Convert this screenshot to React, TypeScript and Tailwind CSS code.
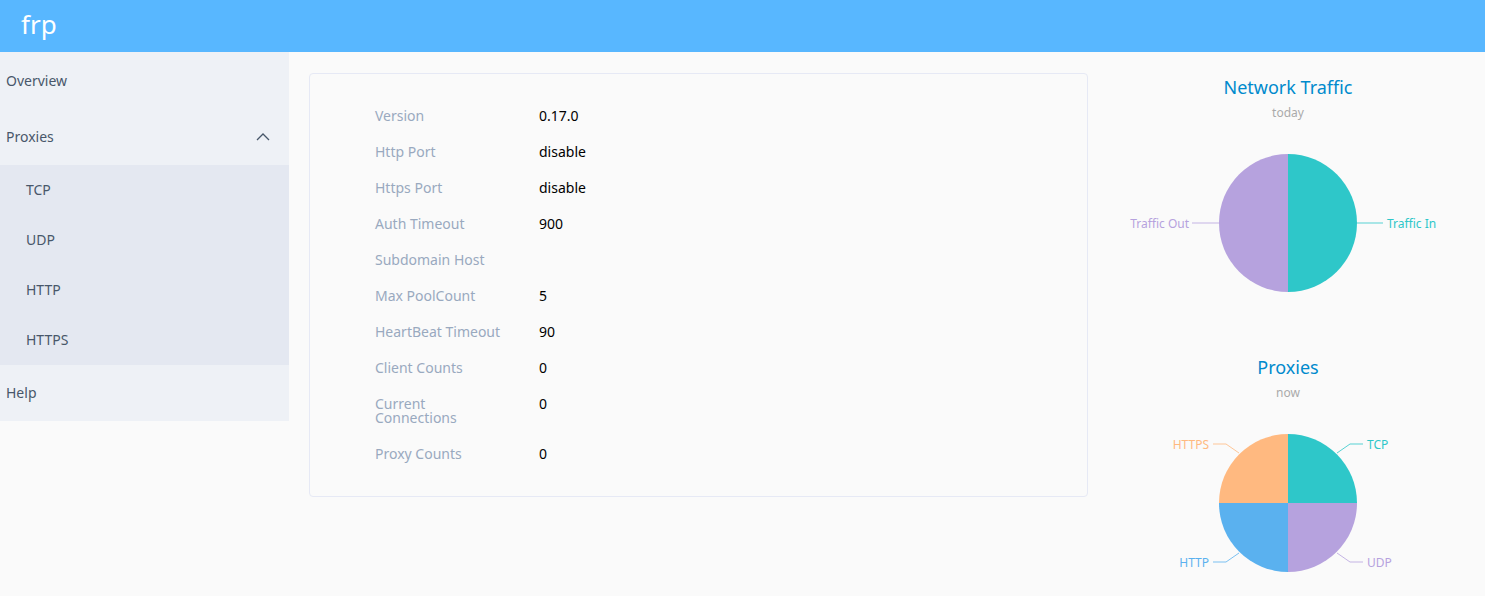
import type { ReactNode } from "react";

const font = { fontFamily: '"Noto Sans", "Liberation Sans", sans-serif' };

const serverInfo: { label: ReactNode; value: string }[] = [
  { label: "Version", value: "0.17.0" },
  { label: "Http Port", value: "disable" },
  { label: "Https Port", value: "disable" },
  { label: "Auth Timeout", value: "900" },
  { label: "Subdomain Host", value: "" },
  { label: "Max PoolCount", value: "5" },
  { label: "HeartBeat Timeout", value: "90" },
  { label: "Client Counts", value: "0" },
  {
    label: (
      <>
        Current
        <br />
        Connections
      </>
    ),
    value: "0",
  },
  { label: "Proxy Counts", value: "0" },
];

const proxyTypes = ["TCP", "UDP", "HTTP", "HTTPS"];

function Sidebar() {
  return (
    <aside className="w-[289px] shrink-0 self-start bg-[#eef1f6] text-[14px] text-[#48576a]">
      <div className="flex h-[56px] items-center pl-[6px]">Overview</div>
      <div className="flex h-[57px] items-center justify-between pl-[6px] pr-[19px]">
        <span>Proxies</span>
        <svg width="14" height="8" viewBox="0 0 14 8" fill="none">
          <polyline points="1,7 7,1 13,7" stroke="#48576a" strokeWidth="1.3" />
        </svg>
      </div>
      <div className="bg-[#e4e8f1]">
        {proxyTypes.map((t) => (
          <div key={t} className="flex h-[50px] items-center pb-[1px] pl-[26px]">
            {t}
          </div>
        ))}
      </div>
      <div className="flex h-[56px] items-center pb-[1px] pl-[6px]">Help</div>
    </aside>
  );
}

function ServerCard() {
  return (
    <div className="w-[779px] shrink-0 rounded-[4px] border border-[#e6e9f5] bg-[#fafafa] pb-[24px] pl-[65px] pt-[24px]">
      {serverInfo.map((row, i) => (
        <div key={i} className="flex py-[11px] text-[14px] leading-[14px]">
          <span className="w-[164px] shrink-0 text-[#99a9bf]">{row.label}</span>
          <span className="text-black">{row.value}</span>
        </div>
      ))}
    </div>
  );
}

type Slice = { name: string; color: string; from: number; to: number };

function arcPath(cx: number, cy: number, r: number, from: number, to: number) {
  // angles in degrees, 0 = top, clockwise
  const rad = (a: number) => ((a - 90) * Math.PI) / 180;
  const x1 = cx + r * Math.cos(rad(from));
  const y1 = cy + r * Math.sin(rad(from));
  const x2 = cx + r * Math.cos(rad(to));
  const y2 = cy + r * Math.sin(rad(to));
  const large = to - from > 180 ? 1 : 0;
  return `M${cx},${cy} L${x1},${y1} A${r},${r} 0 ${large} 1 ${x2},${y2} Z`;
}

function PieChart({
  title,
  subtitle,
  slices,
  labels,
}: {
  title: string;
  subtitle: string;
  slices: Slice[];
  labels: ReactNode;
}) {
  const cx = 197;
  const cy = 102;
  const r = 69;
  return (
    <div className="flex h-[280px] flex-col items-center pl-[3px]">
      <div className="h-[24px] text-[18px] leading-[24px] text-[#008acd]">{title}</div>
      <div className="mt-[6px] h-[16px] text-[12px] leading-[16px] text-[#aaaaaa]">{subtitle}</div>
      <svg width="394" height="234" viewBox="0 0 394 234" className="shrink-0">
        {slices.map((s) => (
          <path key={s.name} d={arcPath(cx, cy, r, s.from, s.to)} fill={s.color} />
        ))}
        {labels}
      </svg>
    </div>
  );
}

const teal = "#2ec7c9";
const purple = "#b6a2de";
const blue = "#5ab1ef";
const orange = "#ffb980";

function Label({
  points,
  color,
  x,
  y,
  text,
  anchor,
}: {
  points: string;
  color: string;
  x: number;
  y: number;
  text: string;
  anchor: "start" | "end";
}) {
  return (
    <g>
      <polyline points={points} fill="none" stroke={color} strokeWidth="1" opacity="0.8" />
      <text x={x} y={y} fill={color} fontSize="12" textAnchor={anchor} dominantBaseline="central">
        {text}
      </text>
    </g>
  );
}

export default function App() {
  return (
    <div className="h-screen overflow-hidden bg-[#fafafa]" style={font}>
      <header className="flex h-[52px] items-center bg-[#58b7ff] pb-[3px] pl-[21px] text-[26px] text-white">
        frp
      </header>
      <div className="flex">
        <Sidebar />
        <main className="flex flex-1 items-start pl-[20px] pt-[21px]">
          <ServerCard />
          <div className="-mt-[21px] flex flex-1 flex-col pt-[23px]">
            <PieChart
              title="Network Traffic"
              subtitle="today"
              slices={[
                { name: "Traffic In", color: teal, from: 0, to: 180 },
                { name: "Traffic Out", color: purple, from: 180, to: 360 },
              ]}
              labels={
                <>
                  <Label points="266,102 292,102" color={teal} x={296} y={102} text="Traffic In" anchor="start" />
                  <Label points="128,102 101,102" color={purple} x={98} y={102} text="Traffic Out" anchor="end" />
                </>
              }
            />
            <PieChart
              title="Proxies"
              subtitle="now"
              slices={[
                { name: "TCP", color: teal, from: 0, to: 90 },
                { name: "UDP", color: purple, from: 90, to: 180 },
                { name: "HTTP", color: blue, from: 180, to: 270 },
                { name: "HTTPS", color: orange, from: 270, to: 360 },
              ]}
              labels={
                <>
                  <Label points="246,52 259,43 272,43" color={teal} x={276} y={43} text="TCP" anchor="start" />
                  <Label points="246,152 259,161 272,161" color={purple} x={276} y={161} text="UDP" anchor="start" />
                  <Label points="148,152 135,161 122,161" color={blue} x={118} y={161} text="HTTP" anchor="end" />
                  <Label points="148,52 135,43 122,43" color={orange} x={118} y={43} text="HTTPS" anchor="end" />
                </>
              }
            />
          </div>
        </main>
      </div>
    </div>
  );
}
